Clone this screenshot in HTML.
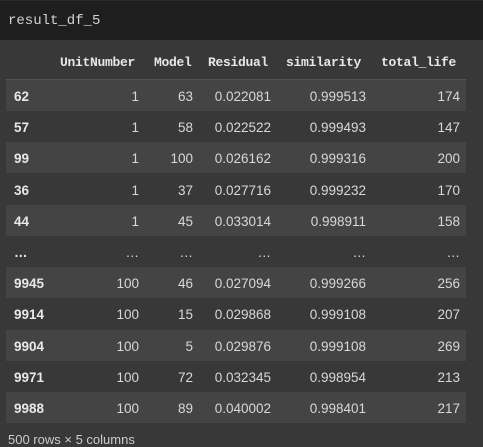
<!DOCTYPE html>
<html><head><style>
body{margin:0;width:483px;height:438px;background:#383838;overflow:hidden;position:relative;font-family:"Liberation Sans",sans-serif;}
.top{position:absolute;left:0;top:0;width:483px;height:40px;background:#1e1e1e;border-top:1px solid #2a2a2a;box-sizing:border-box}
.top span{position:absolute;left:8px;top:12px;color:#d4d4d4;font:14px "Liberation Mono",monospace;}
.hdr{position:absolute;top:55px;font:bold 13px "Liberation Mono",monospace;color:#e6e6ee;letter-spacing:-0.3px}
.line{position:absolute;left:6px;top:79px;width:460px;height:1px;background:#555}
.row{position:absolute;left:6px;width:460px;height:31px;}
.l{background:#444}
.c{position:absolute;top:9px;font-size:13.5px;color:#d8d8d8;text-align:right}
.i{position:absolute;top:9px;left:8px;font-size:13.5px;font-weight:bold;color:#e8e8e8}
.foot{position:absolute;left:8px;top:432px;font-size:13px;color:#ccc}
</style></head><body>
<div class="top"><span>result_df_5</span></div>
<div class="hdr" style="left:60px">UnitNumber</div>
<div class="hdr" style="left:154px">Model</div>
<div class="hdr" style="left:208px">Residual</div>
<div class="hdr" style="left:286px">similarity</div>
<div class="hdr" style="left:381px">total_life</div>
<div class="line"></div>
<div id="rows"></div>
<script>
var d=[["62","1","63","0.022081","0.999513","174"],["57","1","58","0.022522","0.999493","147"],["99","1","100","0.026162","0.999316","200"],["36","1","37","0.027716","0.999232","170"],["44","1","45","0.033014","0.998911","158"],["…","…","…","…","…","…"],["9945","100","46","0.027094","0.999266","256"],["9914","100","15","0.029868","0.999108","207"],["9904","100","5","0.029876","0.999108","269"],["9971","100","72","0.032345","0.998954","213"],["9988","100","89","0.040002","0.998401","217"]];
var R=[133,187,265,360,454];var h="";
var lt=[1,0,1,0,1,0,1,0,1,0,1];
for(var k=0;k<d.length;k++){var r=d[k];var y=80+Math.round(k*31.2);
h+='<div class="row'+(lt[k]?' l':'')+'" style="top:'+y+'px"><div class="i">'+r[0]+'</div>';
for(var j=1;j<6;j++)h+='<div class="c" style="right:'+(460-R[j-1])+'px">'+r[j]+'</div>';
h+='</div>';}
document.getElementById('rows').innerHTML=h;
</script>
<div class="foot">500 rows × 5 columns</div>
</body></html>
